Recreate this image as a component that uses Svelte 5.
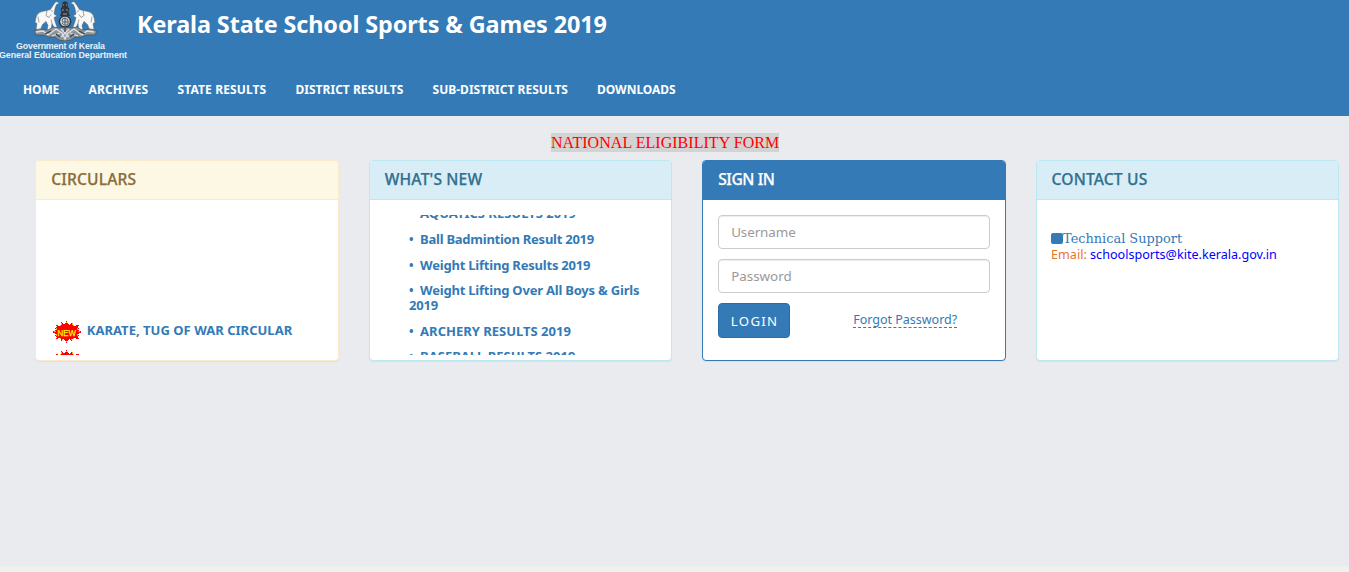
<script>
  const menu = [
    { label: 'HOME', cls: 'm1' },
    { label: 'ARCHIVES', cls: 'm2' },
    { label: 'STATE RESULTS', cls: 'm3' },
    { label: 'DISTRICT RESULTS', cls: 'm4' },
    { label: 'SUB-DISTRICT RESULTS', cls: 'm5' },
    { label: 'DOWNLOADS', cls: 'm6' }
  ];
  const news = [
    'AQUATICS RESULTS 2019',
    'Ball Badmintion Result 2019',
    'Weight Lifting Results 2019',
    'Weight Lifting Over All Boys & Girls 2019',
    'ARCHERY RESULTS 2019',
    'BASEBALL RESULTS 2019'
  ];
</script>

{#snippet elephant()}
  <path class="skin" d="M26 4 Q25 1.5 22.5 2.5 L20 6 L17.5 10 L14 11 L9 12 Q4 13 3 18 L2 23 L4 24 L3 30 L7 31 L9.5 25 L13 22 L15 26 L14 31 L18 31 L19 24 L22 30 L24.5 29 L22 22 L21 18 L24 16.5 L21 14.5 L22 9 L23.5 5 Z" />
  <path class="ink" d="M14 11 L13 16 L16 18 L18 15 M18 11 L20 12 M5 17 L6 23 M10 25 L13 22 M18 20 L19 24" />
{/snippet}

{#snippet burst()}
  <svg class="burst" width="30" height="22" viewBox="0 0 30 22" shape-rendering="crispEdges">
    <path d="M0 11 L4 9 L3 7 L5 6 L3 4 L9 5 L9 1 L12 4 L14.5 0 L17 4 L20 1 L21 5 L27 4 L25 6 L27 7 L26 9 L30 11 L26 13 L27 15 L25 16 L27 18 L21 17 L20 20 L17 18 L14.5 22 L12 18 L9 20 L9 17 L3 18 L5 16 L3 15 L4 13 Z" fill="#f00" />
    <path d="M9 2h1v2h-1zM20 2h1v2h-1zM14 1h1v1h-1zM8 4h1v1h-1zM21 4h1v1h-1zM4 7h1v2h-1zM25 7h1v2h-1zM2 10h2v1h-2zM26 10h2v1h-2zM4 13h1v2h-1zM25 13h1v2h-1zM8 17h1v1h-1zM21 17h1v1h-1zM10 18h1v1h-1zM19 18h1v1h-1zM14 20h1v1h-1z" fill="#fa0" />
    <text x="5.5" y="14.5" textLength="18.5" lengthAdjust="spacingAndGlyphs">NEW</text>
  </svg>
{/snippet}

<div class="page">
  <header>
    <div class="brand">
      <div class="logo">
        <svg width="66" height="41" viewBox="0 0 66 41">
          <g transform="translate(0 -.5)">{@render elephant()}</g>
          <g transform="translate(64 -.5) scale(-1 1)">{@render elephant()}</g>
          <path class="base" d="M1 31 L6 29 L15 30 L20 27 L27 28 L32 26 L37 28 L44 27 L49 30 L58 29 L64 31 L62 35 L54 35 L48 37 L42 37 L38 40 L32 41 L26 40 L22 37 L16 37 L10 35 L3 35 Z" />
          <path class="line" d="M3 32 L10 31 L15 35 L23 29 L29 33 L32 39 L35 33 L41 29 L49 35 L54 31 L61 32 M19 36 L27 33 M45 36 L37 33 M28 29 L36 37 M36 29 L28 37" />
          <path class="dark" d="M12 34 L18 31 M46 31 L52 34 M23 34 L27 37 M41 34 L37 37 M32 28 L32 32" />
          <path d="M29.5 2.5 L31 1.5 L33 1.5 L34.5 2.5 L35 7 L36.5 9 L35.5 12 L37 16 L27 16 L28.5 12 L27.5 9 L29 7 Z" fill="#30353b" />
          <path d="M30 5h1M33 5h1M29 10h2M33 10h2M30 14h4" stroke="#929da6" />
          <circle cx="32" cy="21.5" r="5.6" fill="#cbd1d5" stroke="#30383f" stroke-width="1.5" />
          <path d="M29 21 Q29 18 32 18 Q36 19 35 24 Q32 27 29 23 M32 18v7M29 22h6" fill="none" stroke="#535e68" />
        </svg>
        <span class="gov">Government of Kerala</span>
        <span class="dept">General Education Department</span>
      </div>
      <h1>Kerala State School Sports &amp; Games 2019</h1>
    </div>
    <nav>
      {#each menu as item}
        <a href="#top" class={item.cls}>{item.label}</a>
      {/each}
    </nav>
  </header>

  <main>
    <div class="notice"><a href="#form">NATIONAL ELIGIBILITY FORM</a></div>
    <div class="panels">
      <section class="panel warning">
        <h2>CIRCULARS</h2>
        <div class="body">
          <div class="ticker circulars">
            <div class="circular">{@render burst()}<a href="#karate">KARATE, TUG OF WAR CIRCULAR</a></div>
            <div class="circular">{@render burst()}</div>
          </div>
        </div>
      </section>

      <section class="panel info whats">
        <h2>WHAT'S NEW</h2>
        <div class="body">
          <div class="ticker">
            <div class="news">
              {#each news as item, i}
                <p class="n{i}"><span class="dot">•</span><a href="#news">{item}</a></p>
              {/each}
            </div>
          </div>
        </div>
      </section>

      <section class="panel primary">
        <h2>SIGN IN</h2>
        <form class="body">
          <input class="user" type="text" placeholder="Username" />
          <input class="pass" type="password" placeholder="Password" />
          <div class="actions">
            <button type="button">LOGIN</button>
            <a href="#forgot">Forgot Password?</a>
          </div>
        </form>
      </section>

      <section class="panel info contact">
        <h2>CONTACT US</h2>
        <div class="body">
          <div class="support"><i></i><span>Technical Support</span></div>
          <div class="email">Email: <a href="#mail">schoolsports@kite.kerala.gov.in</a></div>
        </div>
      </section>
    </div>
  </main>
</div>

<style>
  :global(body) { margin: 0; background: #f0f0ee; overflow: hidden; }
  * { box-sizing: border-box; }
  a { text-decoration: none; color: inherit; }
  .page { font-family: "Noto Sans", sans-serif; font-size: 13px; height: 572px; overflow: hidden; }
  header { height: 116px; background: #347ab6; color: #fff; }
  .brand { display: flex; height: 76px; }
  .logo { width: 137px; display: flex; flex-direction: column; align-items: flex-start; font: bold 8.9px/9px "Liberation Sans", sans-serif; color: #e8f0f7; white-space: nowrap; }
  .logo svg { margin-left: 33px; flex: none; }
  .gov { margin-left: 16px; margin-top: 1px; letter-spacing: -.2px; }
  .dept { margin-left: -1px; letter-spacing: -.08px; }
  .skin { fill: #f8f8f7; stroke: #59636c; stroke-width: .5; }
  .ink { fill: none; stroke: #858c91; stroke-width: .8; }
  .base { fill: #8d959b; stroke: #444e57; stroke-width: .7; }
  .line { fill: none; stroke: #dde1e3; stroke-width: 1.3; }
  .dark { fill: none; stroke: #39434b; stroke-width: 1.2; }
  h1 { margin: 7px 0 0; font-size: 23.4px; line-height: 34px; font-weight: 700; white-space: nowrap; letter-spacing: -.1px; }
  nav { display: flex; padding-left: 23px; gap: 29px; font-size: 12px; font-weight: 700; line-height: 27px; white-space: nowrap; }
  .m1 { width: 36.5px; } .m2 { width: 60px; } .m3 { width: 89px; }
  .m4 { width: 108px; } .m5 { width: 135.5px; } .m6 { width: 80px; }
  nav a { letter-spacing: .02px; }
  nav .m2, nav .m3 { letter-spacing: .12px; }
  nav .m1 { letter-spacing: -.13px; }
  nav .m6 { letter-spacing: -.03px; }
  main { height: 450px; background: #e9ebee; }
  .notice { height: 44px; padding: 16px 0 0 551px; font: 16px/20px "Liberation Serif", serif; color: #f00; }
  .notice a { display: inline-block; height: 19px; line-height: 20px; margin-top: 1px; background: #d3d3d3; white-space: nowrap; letter-spacing: .04px; }
  .panels { display: grid; grid-template-columns: repeat(4, 1fr); gap: 30px; padding: 0 10px 0 35.3px; }
  .panel { height: 201px; background: #fff; border: 1px solid; border-radius: 4px; box-shadow: 0 1px 1px rgba(0,0,0,.05); overflow: hidden; min-width: 0; }
  h2 { margin: 0; height: 39px; padding: 0 15px; font-size: 15.6px; line-height: 36px; font-weight: 500; border-bottom: 1px solid; border-color: inherit; letter-spacing: .15px; -webkit-text-stroke: .25px currentColor; }
  .primary h2 { letter-spacing: -.4px; }
  .body { padding: 15px; }
  .warning { border-color: #faebcc; }
  .warning h2 { background: #fcf8e3; color: #8a6d3b; }
  .info { border-color: #bce8f1; }
  .info h2 { background: #d9edf7; color: #31708f; }
  .primary { border-color: #347ab6; }
  .primary h2 { background: #347ab6; color: #fff; }
  .ticker { height: 140px; overflow: hidden; color: #347ab6; font-weight: 700; }
  .circulars { padding: 105.5px 0 0 1px; }
  .circular { height: 29px; display: flex; gap: 4.5px; align-items: flex-start; line-height: 18px; white-space: nowrap; letter-spacing: .02px; }
  .burst { flex: none; }
  .burst text { font: 9.5px "Liberation Sans", sans-serif; fill: #ff0; stroke: #ff0; stroke-width: .25px; }
  .news { padding-left: 24.4px; margin-top: -9.4px; }
  .news p { margin: 0 0 10.4px 0; line-height: 15.2px; }
  .news .n0 { margin-bottom: 11.1px; }
  .news .n1, .news .n2, .news .n3 { letter-spacing: -.21px; }
  .news .n1 { letter-spacing: -.25px; }
  .dot { display: inline-block; width: 11px; line-height: 12px; font-size: 12px; }
  form { margin: 0; }
  input { display: block; width: 100%; height: 34px; margin-bottom: 10px; padding: 6px 12px; border: 1px solid #ccc; border-radius: 4px; font: 13.4px "Noto Sans", sans-serif; box-shadow: inset 0 1px 1px rgba(0,0,0,.075); background: #fff; }
  input::placeholder { color: #999; opacity: 1; }
  .user { letter-spacing: -.08px; }
  .actions { display: flex; gap: 63px; align-items: flex-start; }
  button { width: 72px; height: 35px; padding: 0 0 0 1px; border: 1px solid #2e6da4; border-radius: 4px; background: #347ab6; color: #fff; font: 13.2px "Noto Sans", sans-serif; letter-spacing: 1.3px; }
  .actions a { margin-top: 9px; height: 16px; line-height: 15px; color: #347ab6; border-bottom: 1px dashed #347ab6; font-size: 12.5px; white-space: nowrap; }
  .contact .body { padding: 31px 14.5px; line-height: 16px; font-size: 12.6px; white-space: nowrap; }
  .support { display: flex; align-items: center; height: 16px; font-family: "DejaVu Serif", serif; font-size: 12.9px; color: #347ab6; }
  .support i { width: 12px; height: 11px; border-radius: 2px; background: #347ab6; margin-top: -1px; }
  .email { color: #e8742c; margin-top: -.5px; }
  .email a { color: #00f; }
</style>
